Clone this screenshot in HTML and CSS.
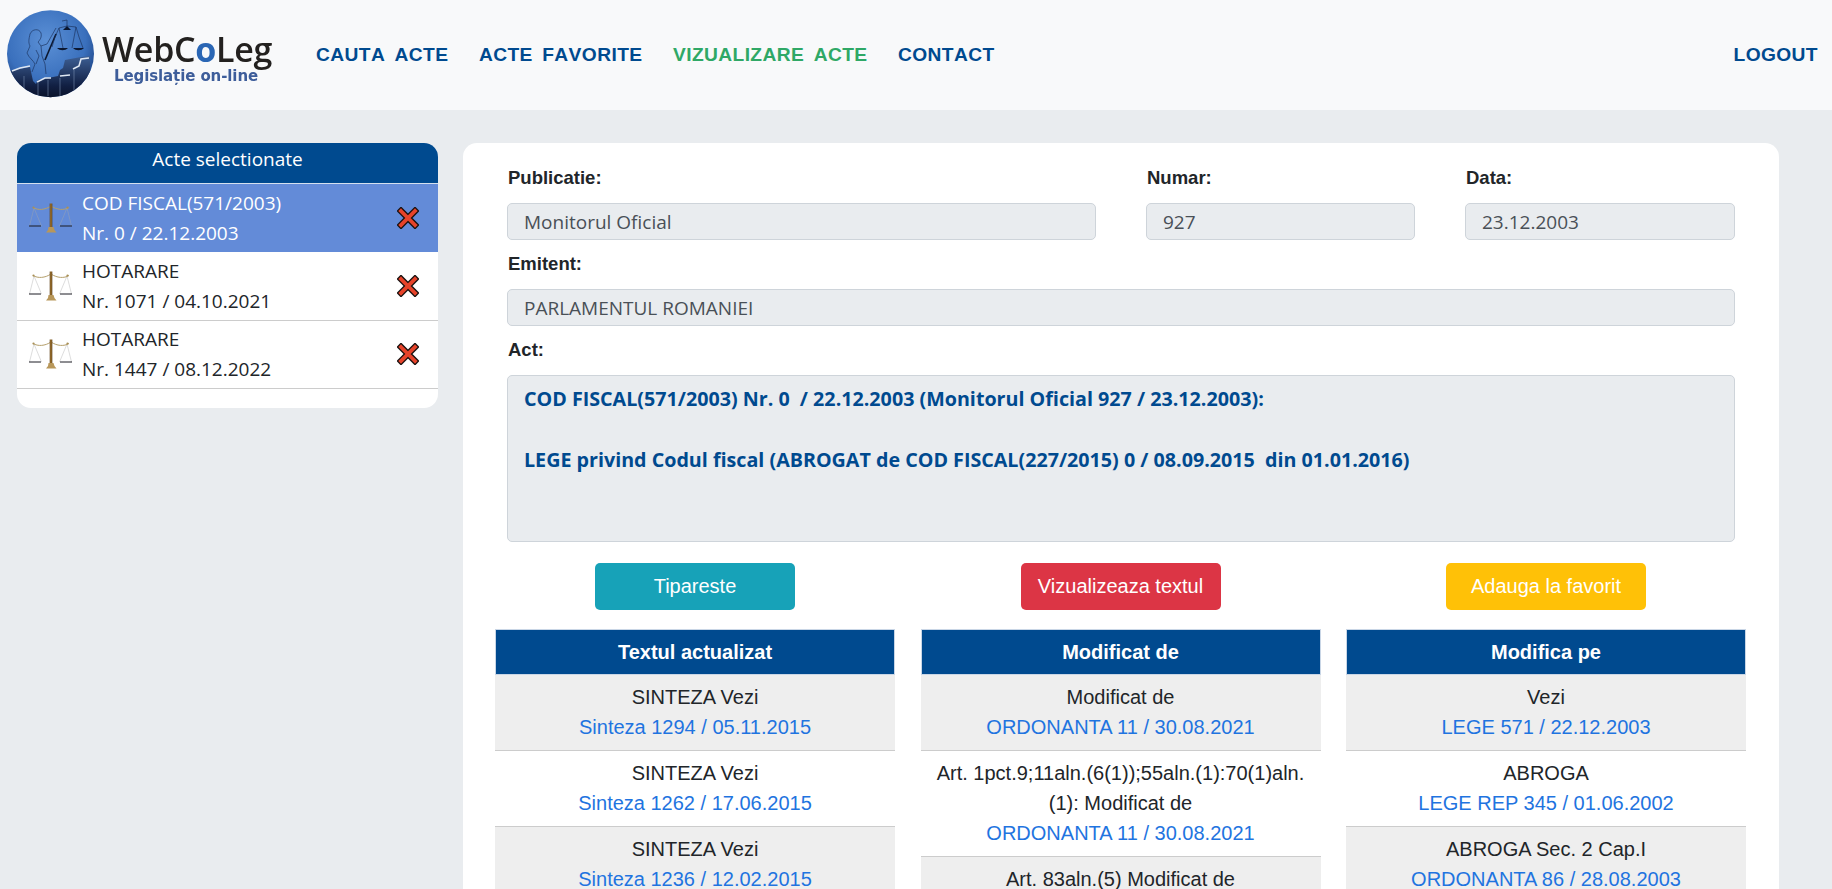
FILE: index.html
```html
<!DOCTYPE html>
<html lang="ro">
<head>
<meta charset="utf-8">
<title>WebCoLeg</title>
<link rel="stylesheet" href="styles.css">
</head>
<body>
<svg class="defs" width="0" height="0" aria-hidden="true">
  <defs>
    <linearGradient id="gold" x1="0" y1="0" x2="1" y2="0">
      <stop offset="0" stop-color="#5e3d12"/><stop offset=".5" stop-color="#a77c35"/><stop offset="1" stop-color="#4d300c"/>
    </linearGradient>
    <symbol id="scale" viewBox="0 0 43 30">
      <g class="strings">
        <path d="M5 5 0.5 23M5 5l7.500 18M38 5l-7.500 18M38 5l4.500 18"/>
      </g>
      <path class="arm" d="M4 4.500c5 3 12 2.500 18-1.500 6 4 13 4.500 18 1.500"/>
      <circle class="knob" cx="4.500" cy="4.500" r="1.100"/><circle class="knob" cx="38.500" cy="4.500" r="1.100"/>
      <path class="pan" d="M0 23h12M31 23h12"/>
      <rect x="20.700" y="0.500" width="2.600" height="24" fill="url(#gold)"/>
      <path class="base" d="M19.500 24h5l1 3 2 2.500H17l2-2.500z"/>
    </symbol>
    <symbol id="cross" viewBox="0 0 22 22">
      <path class="x-out" d="M4 4l14 14M18 4 4 18"/>
      <path class="x-in" d="M4 4l14 14M18 4 4 18"/>
    </symbol>
  </defs>
</svg>

<header class="topbar">
  <a class="logo" href="#" aria-label="WebCoLeg">
    <svg class="logo-svg" width="290" height="110" viewBox="0 0 290 110">
      <defs>
        <radialGradient id="globe" cx=".45" cy=".35" r=".7">
          <stop offset="0" stop-color="#5b90d6"/><stop offset=".65" stop-color="#3a70bd"/><stop offset="1" stop-color="#173a78"/>
        </radialGradient>
        <linearGradient id="books" x1="0" y1="0" x2="0" y2="1">
          <stop offset="0" stop-color="#3d5f94"/><stop offset=".6" stop-color="#111f42"/><stop offset="1" stop-color="#060a18"/>
        </linearGradient>
        <clipPath id="disc"><circle cx="50.500" cy="53.700" r="43.500"/></clipPath>
      </defs>
      <circle cx="50.500" cy="53.700" r="43.500" fill="url(#globe)"/>
      <g clip-path="url(#disc)">
        <path fill="url(#books)" d="M5 72l9-2 16-3 3 14 3 3 2-4 20-4 2-6 3-2 2-8 16-3 9-1v50H5z"/>
        <path class="book-top" d="M12 71l8-3 10-2M37 82l8-4 6 0M60 76l10-1M73 69l6-3 2-7 8-1"/>
        <path class="book-line" d="M24 76v20M38 82v14M48 80v16M60 78v18M74 70v26"/>
        <path class="figure" d="M30 34c2-5 9-6 11-1 1 4-1 7-3 9l3 4 6-2 9-16M30 34c-1 5-2 8 0 12l-3 7c2 5 6 7 8 11l-3 8M41 46l1 10 3 8 1 10M36 50l3 6-3 8"/>
        <path class="sword" d="M45 60l11-26"/>
        <path class="figure" d="M67 20v6M62 21l5-1M55 37l4-9 8-2 9 1 3 10M55 37l-3 10M59 28l4 20M76 27l-4 21M79 37l4 11"/>
        <path class="scale-pan" d="M57 48c3 3 8 3 11 0zM73 48c3 3 8 3 11 0z"/>
        <path class="scale-pan" d="M63 30l4-4 4 4z"/>
      </g>
      <text class="logo-main" x="102" y="62">WebC<tspan class="logo-o">o</tspan>Leg</text>
      <text class="logo-sub" x="114" y="81">Legislație on-line</text>
    </svg>
  </a>
  <nav class="nav">
    <a class="nav-link" href="#">CAUTA  ACTE</a>
    <a class="nav-link" href="#">ACTE  FAVORITE</a>
    <a class="nav-link nav-active" href="#">VIZUALIZARE  ACTE</a>
    <a class="nav-link" href="#">CONTACT</a>
  </nav>
  <a class="nav-link logout" href="#">LOGOUT</a>
</header>

<main class="page">
  <aside class="sidebar">
    <h2 class="side-title">Acte selectionate</h2>
    <ul class="side-list">
      <li class="side-item selected">
        <svg class="scale-icon"><use href="#scale"/></svg>
        <div class="side-text"><div>COD FISCAL(571/2003)</div><div>Nr. 0 / 22.12.2003</div></div>
        <svg class="cross-icon"><use href="#cross"/></svg>
      </li>
      <li class="side-item">
        <svg class="scale-icon"><use href="#scale"/></svg>
        <div class="side-text"><div>HOTARARE</div><div>Nr. 1071 / 04.10.2021</div></div>
        <svg class="cross-icon"><use href="#cross"/></svg>
      </li>
      <li class="side-item">
        <svg class="scale-icon"><use href="#scale"/></svg>
        <div class="side-text"><div>HOTARARE</div><div>Nr. 1447 / 08.12.2022</div></div>
        <svg class="cross-icon"><use href="#cross"/></svg>
      </li>
    </ul>
  </aside>

  <section class="panel">
    <div class="form">
      <div class="form-row">
        <div class="field"><div class="label">Publicatie:</div><div class="control">Monitorul Oficial</div></div>
        <div class="field"><div class="label">Numar:</div><div class="control">927</div></div>
        <div class="field"><div class="label">Data:</div><div class="control">23.12.2003</div></div>
      </div>
      <div class="field"><div class="label">Emitent:</div><div class="control">PARLAMENTUL ROMANIEI</div></div>
      <div class="field"><div class="label">Act:</div><div class="control act-text">COD FISCAL(571/2003) Nr. 0  / 22.12.2003 (Monitorul Oficial 927 / 23.12.2003):

LEGE privind Codul fiscal (ABROGAT de COD FISCAL(227/2015) 0 / 08.09.2015  din 01.01.2016)</div></div>
    </div>

    <div class="columns">
      <div class="column">
        <button class="btn btn-info" type="button">Tipareste</button>
        <div class="col-head">Textul actualizat</div>
        <div class="entry odd">SINTEZA Vezi<br><a href="#">Sinteza 1294 / 05.11.2015</a></div>
        <div class="entry">SINTEZA Vezi<br><a href="#">Sinteza 1262 / 17.06.2015</a></div>
        <div class="entry odd">SINTEZA Vezi<br><a href="#">Sinteza 1236 / 12.02.2015</a></div>
      </div>
      <div class="column">
        <button class="btn btn-danger" type="button">Vizualizeaza textul</button>
        <div class="col-head">Modificat de</div>
        <div class="entry odd">Modificat de<br><a href="#">ORDONANTA 11 / 30.08.2021</a></div>
        <div class="entry">Art. 1pct.9;11aln.(6(1));55aln.(1):70(1)aln.(1): Modificat de<br><a href="#">ORDONANTA 11 / 30.08.2021</a></div>
        <div class="entry odd">Art. 83aln.(5) Modificat de</div>
      </div>
      <div class="column">
        <button class="btn btn-warning" type="button">Adauga la favorit</button>
        <div class="col-head">Modifica pe</div>
        <div class="entry odd">Vezi<br><a href="#">LEGE 571 / 22.12.2003</a></div>
        <div class="entry">ABROGA<br><a href="#">LEGE REP 345 / 01.06.2002</a></div>
        <div class="entry odd">ABROGA Sec. 2 Cap.I<br><a href="#">ORDONANTA 86 / 28.08.2003</a></div>
      </div>
    </div>
  </section>
</main>
</body>
</html>
```

FILE: styles.css
```css
* { box-sizing: border-box; }
html, body { margin: 0; height: 100%; overflow: hidden; }
body {
  background: #e9ecef;
  color: #212529;
  font-family: "Open Sans", "Noto Sans", sans-serif;
}
a { text-decoration: none; }
.defs { position: absolute; }

/* top bar */
.topbar {
  display: flex;
  align-items: center;
  height: 110px;
  background: #f8f9fa;
  padding-right: 14px;
}
.logo { display: block; width: 316px; height: 110px; flex: none; }
.logo-svg { display: block; filter: blur(.4px); }
.logo-main { font: 600 34px "Open Sans", sans-serif; fill: #23211f; letter-spacing: -.3px; }
.logo-o { fill: #2a66b4; font-weight: 700; }
.logo-sub { font: 700 15px "DejaVu Sans", sans-serif; fill: #3d5d9a; letter-spacing: -.1px; }
.nav { display: flex; gap: 30.500px; flex: 1; }
.nav-link {
  font: 700 19.200px "Liberation Sans", Arial, sans-serif;
  font-kerning: none;
  letter-spacing: .4px;
  word-spacing: -1px;
  color: #004a8f;
  white-space: pre;
}
.nav-active { color: #2fa866; }

/* page */
.page {
  display: flex;
  align-items: flex-start;
  gap: 25px;
  padding: 33px 53px 0 17px;
}
.sidebar {
  flex: none;
  width: 421px;
  height: 265px;
  background: #fff;
  border-radius: 14px;
  overflow: hidden;
}
.side-title {
  margin: 0;
  height: 41px;
  padding-top: 1px;
  background: #004a8f;
  border-bottom: 1px solid #d5e0ee;
  color: #fff;
  font-size: 19px;
  font-weight: 400;
  line-height: 30px;
  text-align: center;
}
.side-list { list-style: none; margin: 0; padding: 0; }
.side-item {
  display: flex;
  align-items: center;
  height: 68.300px;
  padding-left: 12px;
  border-bottom: 1px solid #ccc;
  font-size: 19px;
  line-height: 30px;
}
.side-item.selected { background: #638bd8; color: #fff; border-bottom-color: #638bd8; }
.scale-icon { width: 43px; height: 30px; flex: none; margin-right: 10px; }
.side-text { flex: 1; }
.cross-icon { width: 22px; height: 22px; flex: none; margin-right: 19px; }
.strings path, .strings { fill: none; stroke: #a8a8a8; stroke-width: .4; }
.selected .strings { stroke: #3f5f9c; }
.arm { fill: none; stroke: #b5a06c; stroke-width: 1; }
.knob { fill: #a98f55; }
.pan { fill: none; stroke: #1c1c24; stroke-width: 1; }
.base { fill: #b8975a; }
.x-out { fill: none; stroke: #1a1210; stroke-width: 6.500; stroke-linecap: square; }
.x-in { fill: none; stroke: #e6432a; stroke-width: 3.800; stroke-linecap: square; }

/* logo details */
.book-top { fill: none; stroke: #dde6f2; stroke-width: 1.600; }
.book-line { fill: none; stroke: #7f95b8; stroke-width: 1; opacity: .55; }
.figure { fill: none; stroke: #1c3460; stroke-width: .8; opacity: .85; }
.sword { fill: none; stroke: #0c1830; stroke-width: 1.600; }
.scale-pan { fill: #0b1730; }

/* main panel */
.panel {
  flex: 1;
  height: 780px;
  background: #fff;
  border-radius: 14px 14px 0 0;
  padding: 20px 33px 0 32px;
}
.form { padding: 0 11px 0 12px; }
.form-row {
  display: grid;
  grid-template-columns: 589px 269px 270px;
  column-gap: 50px;
}
.field { margin-bottom: 9px; }
.label {
  font: 700 18.500px/30px "Liberation Sans", Arial, sans-serif;
  color: #212529;
  margin-bottom: 10px;
  padding-left: 1px;
}
.control {
  height: 37px;
  padding: 0 16px;
  background: #e9ecef;
  border: 1px solid #ced4da;
  border-radius: 5px;
  color: #495057;
  font-size: 19px;
  line-height: 37px;
  white-space: pre-wrap;
}
.act-text {
  height: 167px;
  padding-top: 8px;
  color: #004a8f;
  font-size: 19.700px;
  font-weight: 700;
  line-height: 30.500px;
}

/* result columns */
.columns {
  display: grid;
  grid-template-columns: repeat(3, 400px);
  column-gap: 25.500px;
  margin-top: 20.500px;
  font: 20px/30px "Liberation Sans", Arial, sans-serif;
  text-align: center;
}
.btn {
  display: block;
  width: 200px;
  height: 47px;
  margin: 0 auto 19px;
  padding: 0;
  border: 0;
  border-radius: 5px;
  color: #fff;
  font: 20px "Liberation Sans", Arial, sans-serif;
}
.btn-info { background: #17a2b8; }
.btn-danger { background: #dc3545; }
.btn-warning { background: #ffc107; }
.col-head {
  height: 46.500px;
  background: #004a8f;
  border: 1px solid #c9d6e6;
  color: #fff;
  font-weight: 700;
  line-height: 44px;
}
.entry {
  padding: 7px 15px 8px;
  border-bottom: 1px solid #ccc;
}
.entry.odd { background: #eee; }
.entry a { color: #1f74e0; }
```
